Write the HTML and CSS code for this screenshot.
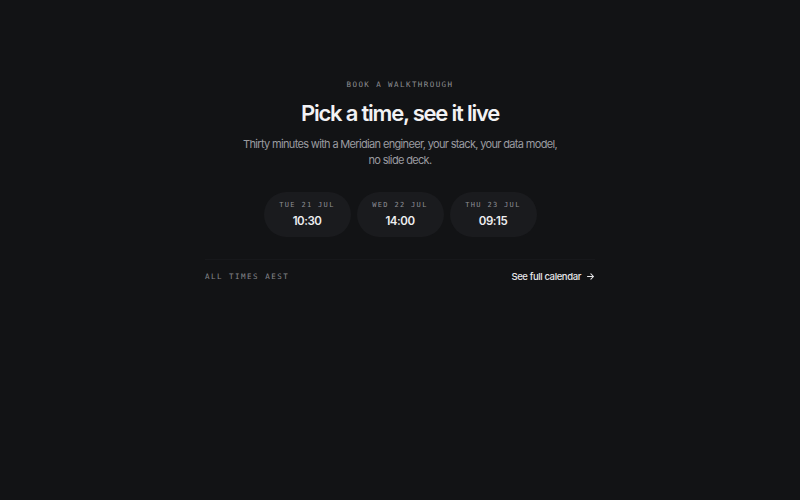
FILE: index.html
```html
<!DOCTYPE html>
<html lang="en">
  <head>
    <meta charset="utf-8" />
    <title>Book a walkthrough</title>
    <link rel="stylesheet" href="styles.css">
  </head>
  <body>
    <main class="booking">
      <p class="eyebrow">Book a walkthrough</p>
      <h1 class="title">Pick a time, see it live</h1>
      <p class="lede">Thirty minutes with a Meridian engineer, your stack, your data model, no slide deck.</p>

      <div class="slots">
        <button class="slot">
          <span class="slot-day">Tue 21 Jul</span>
          <span class="slot-time">10:30</span>
        </button>
        <button class="slot">
          <span class="slot-day">Wed 22 Jul</span>
          <span class="slot-time">14:00</span>
        </button>
        <button class="slot">
          <span class="slot-day">Thu 23 Jul</span>
          <span class="slot-time">09:15</span>
        </button>
      </div>

      <footer class="booking-foot">
        <span class="zone">All times AEST</span>
        <a class="calendar-link" href="#">See full calendar
          <svg class="arrow" viewBox="0 0 12 12" width="9" height="9" aria-hidden="true">
            <path d="M2 6h8M6.5 2.5 10 6l-3.5 3.5" fill="none" stroke="currentColor" stroke-width="1.4" stroke-linecap="round" stroke-linejoin="round"/>
          </svg>
        </a>
      </footer>
    </main>
  </body>
</html>
```

FILE: styles.css
```css
html, body {
  margin: 0;
  height: 100%;
}
body {
  background: #121315;
  color: #ececee;
  font-family: Inter, "Noto Sans", sans-serif;
}
.booking {
  width: 390px;
  margin: 0 auto;
  padding-top: 79px;
  display: flex;
  flex-direction: column;
  align-items: center;
  text-align: center;
}
.eyebrow {
  margin: 0;
  font-family: "DejaVu Sans Mono", "Liberation Mono", monospace;
  font-size: 7.5px;
  letter-spacing: 0.19em;
  text-transform: uppercase;
  color: #8e8f93;
  line-height: 12px;
}
.title {
  margin: 8px 0 0;
  font-size: 22px;
  font-weight: 600;
  letter-spacing: -0.055em;
  line-height: 28px;
  color: #f2f2f4;
}
.lede {
  margin: 9px 0 0;
  width: 322px;
  font-size: 11px;
  letter-spacing: -0.06em;
  line-height: 16px;
  color: #9a9ba0;
}
.slots {
  margin-top: 24px;
  display: flex;
  gap: 6px;
}
.slot {
  width: 87px;
  height: 45px;
  border: 0;
  border-radius: 23px;
  background: #1a1b1e;
  display: flex;
  flex-direction: column;
  align-items: center;
  justify-content: center;
  gap: 4px;
  padding: 0;
  cursor: pointer;
}
.slot-day {
  font-family: "DejaVu Sans Mono", "Liberation Mono", monospace;
  font-size: 7px;
  letter-spacing: 0.19em;
  text-transform: uppercase;
  color: #8e8f94;
  line-height: 10px;
}
.slot-time {
  font-family: Inter, "Noto Sans", sans-serif;
  font-size: 11.5px;
  font-weight: 600;
  letter-spacing: -0.04em;
  color: #eeeef0;
  line-height: 15px;
}
.booking-foot {
  align-self: stretch;
  margin-top: 22px;
  border-top: 1px solid #17181b;
  padding-top: 11px;
  display: flex;
  justify-content: space-between;
  align-items: center;
}
.zone {
  font-family: "DejaVu Sans Mono", "Liberation Mono", monospace;
  font-size: 7.5px;
  letter-spacing: 0.2em;
  text-transform: uppercase;
  color: #86878c;
}
.calendar-link {
  display: flex;
  align-items: center;
  gap: 5px;
  font-size: 9.5px;
  font-weight: 500;
  letter-spacing: -0.04em;
  color: #e6e6e8;
  text-decoration: none;
}
```
